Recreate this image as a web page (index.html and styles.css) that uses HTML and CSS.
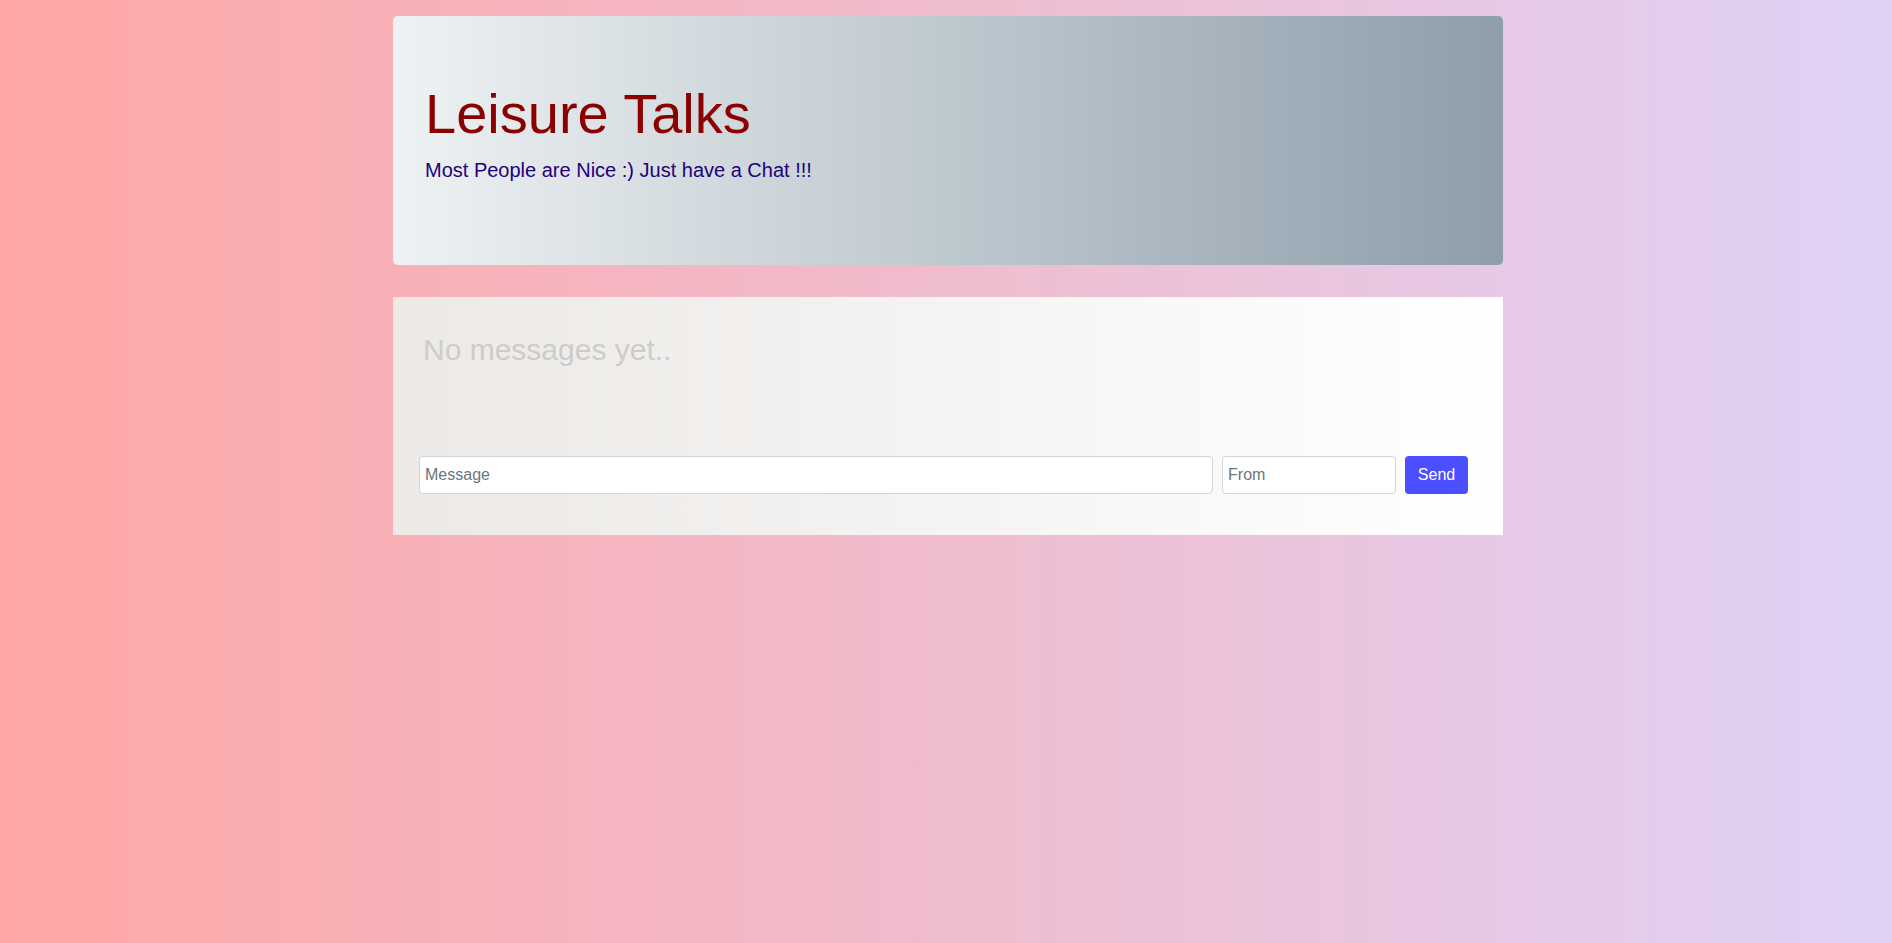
FILE: index.html
```html
<!DOCTYPE html>
<html lang="en">
<head>
<meta charset="utf-8">
<title>Leisure Talks</title>
<link rel="stylesheet" href="styles.css">
</head>
<body>
<div class="container">
  <header class="jumbo">
    <h1 class="title">Leisure Talks</h1>
    <p class="lead">Most People are Nice :) Just have a Chat !!!</p>
  </header>
  <section class="chat">
    <div class="messages">
      <h3 class="empty">No messages yet..</h3>
    </div>
    <form class="send-row">
      <input class="field msg" type="text" placeholder="Message">
      <input class="field from" type="text" placeholder="From">
      <button class="send" type="button">Send</button>
    </form>
  </section>
</div>
</body>
</html>
```

FILE: styles.css
```css
* { box-sizing: border-box; }
html, body { height: 100%; }
body {
  margin: 0;
  padding: 0 0 0 4px;
  font-family: "Liberation Sans", Arial, sans-serif;
  font-size: 16px;
  line-height: 1.5;
  background: linear-gradient(to right, #ffa7a6, #e0d2f6);
  min-height: 943px;
}
.container {
  width: 1110px;
  margin: 0 auto;
  padding-top: 16px;
}
.jumbo {
  background: linear-gradient(to right, #eef2f3, #8e9eab);
  border-radius: 4.8px;
  padding: 64px 32px 64px 32px;
  margin-bottom: 32px;
}
.title {
  margin: 0 0 8px 0;
  font-size: 56px;
  font-weight: 400;
  line-height: 1.2;
  color: #8b0000;
}
.lead {
  margin: 0 0 16px 0;
  font-size: 20px;
  line-height: 1.5;
  color: #22007a;
}
.chat {
  background: linear-gradient(to right, #ece9e6, #ffffff);
  padding: 35px 35px 41px 26px;
}
.messages {
  height: 124px;
}
.empty {
  margin: 0;
  font-size: 30px;
  font-weight: 400;
  line-height: 1.2;
  color: #cccccc;
  padding-left: 4px;
}
.send-row {
  display: flex;
  align-items: center;
  gap: 9px;
  margin: 0;
}
.field {
  height: 38px;
  border: 1px solid #ced4da;
  border-radius: 4px;
  background: #fff;
  padding: 0 5px;
  font-family: "Liberation Sans", Arial, sans-serif;
  font-size: 16px;
  color: #495057;
}
.field::placeholder { color: #6c757d; }
.msg { width: 795px; }
.from { width: 174px; }
.send {
  height: 38px;
  width: 63px;
  border: none;
  border-radius: 4px;
  background: #4a50ff;
  color: #fff;
  font-family: "Liberation Sans", Arial, sans-serif;
  font-size: 16px;
  padding: 0;
}
```
